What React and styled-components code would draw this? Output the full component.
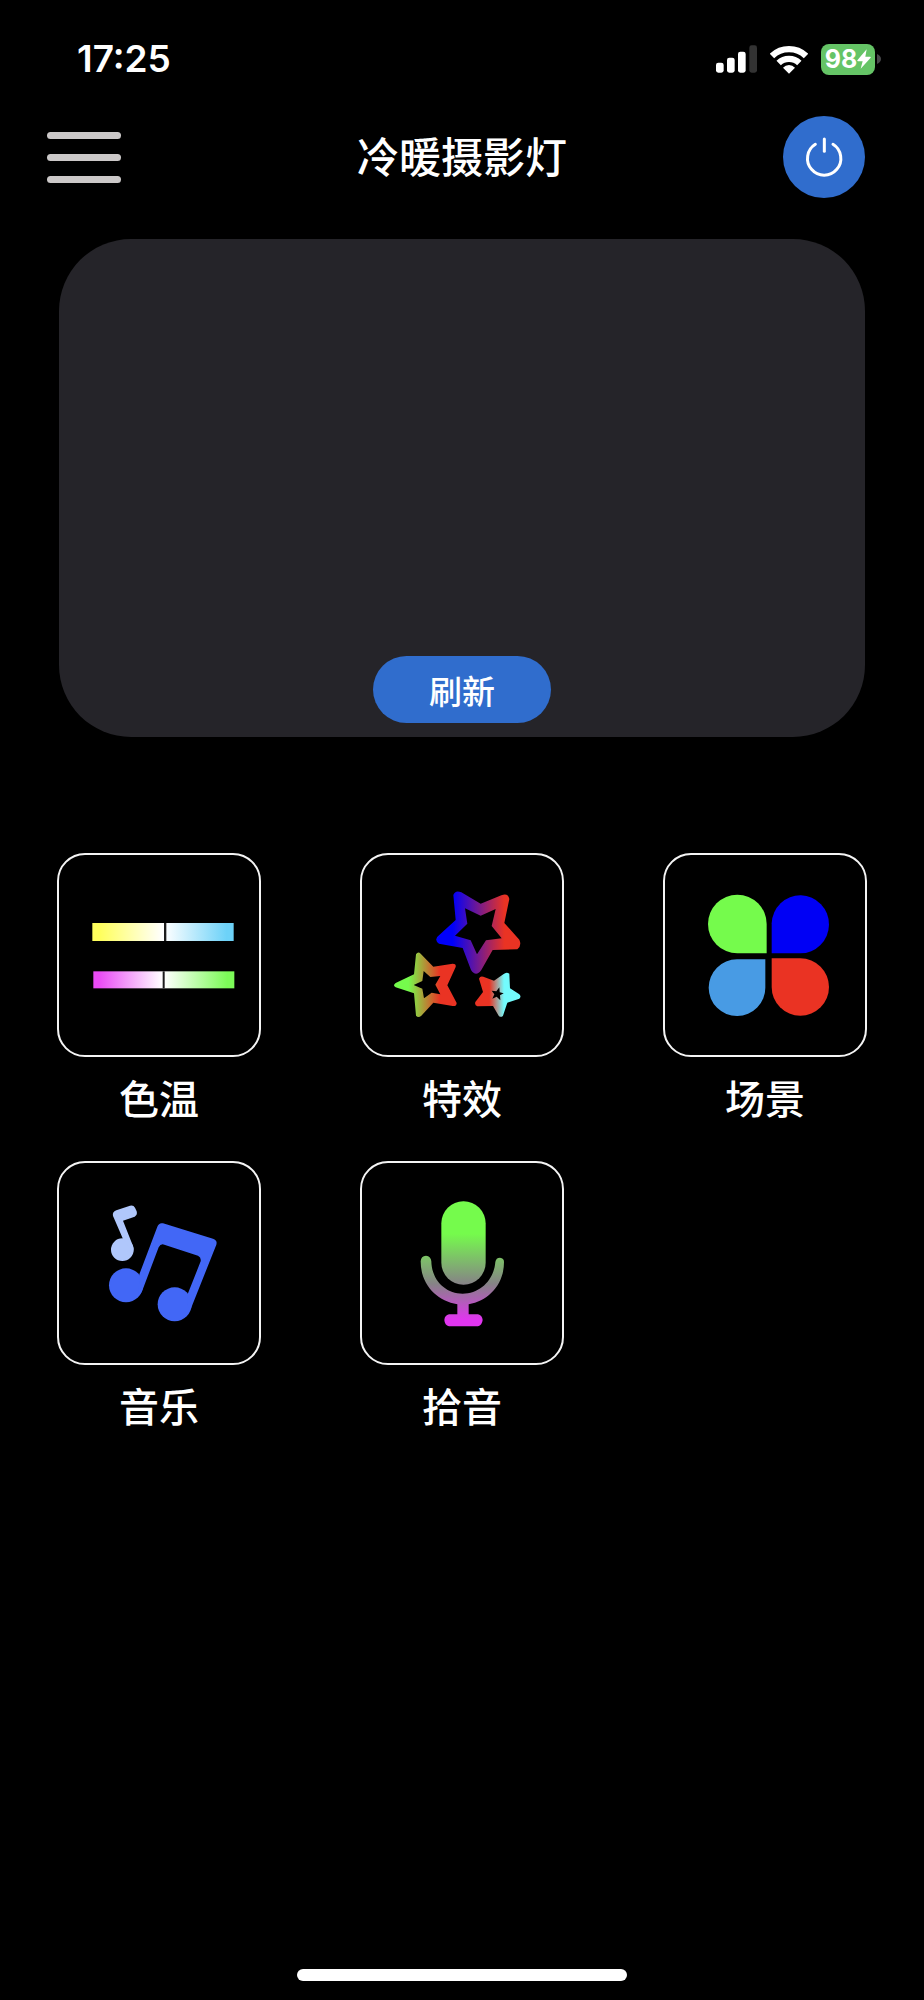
import * as React from 'react';
import styled, { createGlobalStyle } from "styled-components"

const GlobalStyle = createGlobalStyle`
  * {
    box-sizing: border-box;
  }

  body {
    margin: 0;
    background-color: #000000;
    color: #ffffff;
    font-family: 'Inter', 'Noto Sans CJK SC', sans-serif;
  }

  button {
    padding: 0;
    border: none;
    background: none;
    color: inherit;
    font-family: inherit;
    cursor: pointer;
  }
`

const Screen = styled.div`
  min-height: 100vh;
  display: flex;
  flex-direction: column;
`

const StatusBar = styled.div`
  display: flex;
  align-items: center;
  justify-content: space-between;
  padding: 36px 43px 0 77px;
`

const Time = styled.time`
  font-size: 37px;
  font-weight: 600;
  line-height: 46px;
`

const StatusIcons = styled.div`
  display: flex;
  align-items: center;
  gap: 13px;
`

const BatteryWrap = styled.div`
  display: flex;
  align-items: center;
  gap: 2px;
`

const Battery = styled.div`
  display: flex;
  align-items: center;
  justify-content: center;
  width: 54px;
  height: 31px;
  border-radius: 8px;
  background-color: #65c466;
  font-size: 25px;
  font-weight: 700;
  line-height: 31px;
`

const Header = styled.header`
  display: grid;
  grid-template-columns: 1fr auto 1fr;
  align-items: center;
  padding: 34px 47px 0;
`

const MenuButton = styled.button`
  display: flex;
  flex-direction: column;
  gap: 15px;
  width: 74px;
`

const MenuLine = styled.span`
  width: 100%;
  height: 7px;
  border-radius: 4px;
  background-color: #cbc8c8;
`

const Title = styled.h1`
  margin: 0;
  padding-top: 2px;
  font-size: 42px;
  font-weight: 500;
  line-height: 60px;
`

const PowerButton = styled.button`
  display: flex;
  align-items: center;
  justify-content: center;
  justify-self: end;
  width: 82px;
  height: 82px;
  margin-right: 12px;
  border-radius: 50%;
  background-color: #306dcd;
`

const DevicePanel = styled.section`
  display: flex;
  align-items: flex-end;
  justify-content: center;
  aspect-ratio: 806 / 498;
  margin: 41px 59px 0;
  padding-bottom: 14px;
  border-radius: 72px;
  background-color: #252429;
`

const RefreshButton = styled.button`
  width: 178px;
  height: 67px;
  border-radius: 34px;
  background-color: #306dcd;
  font-size: 33px;
  font-weight: 500;
`

const ModeGrid = styled.main`
  display: grid;
  grid-template-columns: repeat(3, 204px);
  justify-content: space-between;
  row-gap: 33px;
  padding: 116px 57px 0;
`

const ModeButton = styled.button`
  display: flex;
  flex-direction: column;
  align-items: center;
  gap: 15px;
  font-size: 40px;
  font-weight: 500;
  line-height: 56px;
`

const Tile = styled.span`
  display: block;
  width: 204px;
  height: 204px;
  border: 2px solid #f4f4f4;
  border-radius: 28px;
  overflow: hidden;

  svg {
    display: block;
    width: 100%;
    height: 100%;
  }
`

const HomeBar = styled.div`
  width: 330px;
  height: 12px;
  margin: auto auto 19px;
  border-radius: 6px;
  background-color: #ffffff;
`

function SignalIcon() {
  return (
    <svg width="41" height="28" viewBox="0 0 123 84" aria-hidden="true">
      <g fill="#ffffff">
        <rect x="0" y="53" width="23" height="30" rx="7" />
        <rect x="33" y="38" width="23" height="45" rx="7" />
        <rect x="66" y="20" width="23" height="63" rx="7" />
      </g>
      <rect x="100" y="1" width="23" height="82" rx="7" fill="#333333" />
    </svg>
  )
}

function WifiIcon() {
  return (
    <svg width="38" height="29" viewBox="0 0 114 87" aria-hidden="true">
      <g fill="none" stroke="#ffffff" strokeWidth="19">
        <path d="M6 33A74 74 0 0 1 108 33" />
        <path d="M26 54A45 45 0 0 1 88 54" />
      </g>
      <path d="M57 86L39 68A25 25 0 0 1 75 68Z" fill="#ffffff" />
    </svg>
  )
}

function BoltIcon() {
  return (
    <svg width="14" height="20" viewBox="0 0 42 60" aria-hidden="true">
      <path d="M29 1L1 34Q0 37 3 37L17 37L11 59L41 26Q42 23 39 23L25 23Z" fill="#ffffff" />
    </svg>
  )
}

function BatteryTip() {
  return (
    <svg width="4" height="10" viewBox="0 0 4 10" aria-hidden="true">
      <path d="M0 0Q4 2 4 5Q4 8 0 10Z" fill="#48484a" />
    </svg>
  )
}

function PowerIcon() {
  return (
    <svg width="40" height="40" viewBox="0 0 120 120" fill="none" stroke="#ffffff" strokeWidth="9" strokeLinecap="round" aria-hidden="true">
      <path d="M34 22A50 50 0 1 0 87 22" />
      <path d="M61 6V43" />
    </svg>
  )
}

function TemperatureIcon() {
  return (
    <svg viewBox="57 44 600 600" aria-hidden="true">
      <defs>
        <linearGradient id="warm">
          <stop offset="0.05" stopColor="#ffff5c" />
          <stop offset="0.5" stopColor="#ffffff" />
          <stop offset="0.55" stopColor="#f2fbff" />
          <stop offset="0.95" stopColor="#6dd2f8" />
        </linearGradient>
        <linearGradient id="tint">
          <stop offset="0.04" stopColor="#ea4bf5" />
          <stop offset="0.49" stopColor="#ffffff" />
          <stop offset="0.52" stopColor="#fafff8" />
          <stop offset="0.95" stopColor="#7cfb58" />
        </linearGradient>
      </defs>
      <rect x="157" y="248" width="424" height="54" fill="url(#warm)" />
      <rect x="372" y="248" width="7" height="54" fill="#1c1c1c" />
      <rect x="160" y="393" width="423" height="51" fill="url(#tint)" />
      <rect x="368" y="393" width="6" height="51" fill="#1c1c1c" />
    </svg>
  )
}

function StarsIcon() {
  return (
    <svg viewBox="66 44 600 600" fillRule="evenodd" aria-hidden="true">
      <defs>
        <linearGradient id="starBig" gradientUnits="userSpaceOnUse" x1="338" y1="0" x2="494" y2="0">
          <stop offset="0" stopColor="#0000fa" />
          <stop offset="1" stopColor="#ea3323" />
        </linearGradient>
        <linearGradient id="starLeft" gradientUnits="userSpaceOnUse" x1="205" y1="0" x2="300" y2="0">
          <stop offset="0" stopColor="#75fb4c" />
          <stop offset="1" stopColor="#ea3323" />
        </linearGradient>
        <linearGradient id="starRight" gradientUnits="userSpaceOnUse" x1="448" y1="0" x2="492" y2="0">
          <stop offset="0" stopColor="#ea3323" />
          <stop offset="1" stopColor="#73fbfd" />
        </linearGradient>
      </defs>
      <path
        fill="url(#starBig)"
        d="M340 164Q346 148 364 156L422 190L484 165Q504 157 508 176L493 248L538 298Q546 316 532 327L458 329L424 389Q408 412 393 389L368 323L297 310Q280 297 297 285L347 239Z
           M375 204L382 250L345 286L392 300L411 342L438 300L485 294L455 257L467 206L422 226Z"
      />
      <path
        fill="url(#starLeft)"
        d="M228 342Q234 332 242 340L280 379L338 370Q349 370 347 380L322 435L350 488Q350 499 338 497L280 487L244 526Q235 534 228 526L222 459L167 441Q157 435 167 428L222 402Z
           M251 392L247 422L221 434L247 445L252 474L275 457L301 462L286 433L301 407L271 410Z"
      />
      <path
        fill="url(#starRight)"
        d="M490 402Q499 393 508 400L510 444L538 462Q545 469 538 475L502 487L489 526Q483 533 476 526L459 497L412 498Q403 494 406 485L429 455L417 415Q420 406 430 409L462 421Z
           M478 441L469 453L455 451L463 462L457 475L470 469L481 480L480 465L491 459L479 456Z"
      />
    </svg>
  )
}

function SceneIcon() {
  return (
    <svg viewBox="75 44 600 600" aria-hidden="true">
      <path d="M380 339H292A88 88 0 1 1 380 251Z" fill="#75fb4c" />
      <path d="M395 339V249A86 87 0 1 1 481 339Z" fill="#0000f5" />
      <path d="M376 357V441A85 85 0 1 1 291 357Z" fill="#489be4" />
      <path d="M395 354H481A86 86 0 1 1 395 440Z" fill="#ea3323" />
    </svg>
  )
}

function MusicIcon() {
  return (
    <svg viewBox="57 53 600 600" aria-hidden="true">
      <g fill="#b0c7fb">
        <circle cx="247" cy="313" r="34" />
        <path d="M219 212Q216 200 229 195L270 181Q280 178 285 187L290 198Q293 209 284 214L249 226L279 302Q282 311 279 322L248 279L222 219Z" />
      </g>
      <g fill="#4267f6">
        <circle cx="258" cy="420" r="51" />
        <circle cx="404" cy="477" r="51" />
        <path d="M298 387L352 244Q357 231 369 234L519 280Q533 285 529 298L452 492Q440 500 444 444L482 348Q484 336 474 331L373 298Q362 294 356 306L309 430Q304 445 296 450Z" />
      </g>
    </svg>
  )
}

function MicIcon() {
  return (
    <svg viewBox="66 53 600 600" aria-hidden="true">
      <defs>
        <linearGradient id="mic" gradientUnits="userSpaceOnUse" x1="0" y1="168" x2="0" y2="543">
          <stop offset="0.26" stopColor="#75fb4c" />
          <stop offset="0.66" stopColor="#868386" />
          <stop offset="0.95" stopColor="#e135f0" />
        </linearGradient>
      </defs>
      <rect x="304" y="168" width="133" height="250" rx="66" fill="url(#mic)" />
      <path
        d="M242 348Q243 332 258 331Q273 333 274 348C275 404 316 445 368 445C420 445 462 404 466 350Q468 337 480 337Q492 338 492 350C492 418 446 466 386 477V507H414Q427 511 428 524Q426 540 414 543H327Q314 540 313 524Q314 510 327 507H352V477C290 466 242 418 242 348Z"
        fill="url(#mic)"
      />
    </svg>
  )
}

export default function App() {
  const modes = [
    { id: 1, label: "色温", icon: <TemperatureIcon /> },
    { id: 2, label: "特效", icon: <StarsIcon /> },
    { id: 3, label: "场景", icon: <SceneIcon /> },
    { id: 4, label: "音乐", icon: <MusicIcon /> },
    { id: 5, label: "拾音", icon: <MicIcon /> },
  ]

  return (
    <Screen lang="zh-CN">
      <GlobalStyle />
      <StatusBar>
        <Time>17:25</Time>
        <StatusIcons>
          <SignalIcon />
          <WifiIcon />
          <BatteryWrap>
            <Battery>
              98
              <BoltIcon />
            </Battery>
            <BatteryTip />
          </BatteryWrap>
        </StatusIcons>
      </StatusBar>
      <Header>
        <MenuButton aria-label="菜单">
          <MenuLine />
          <MenuLine />
          <MenuLine />
        </MenuButton>
        <Title>冷暖摄影灯</Title>
        <PowerButton aria-label="电源">
          <PowerIcon />
        </PowerButton>
      </Header>
      <DevicePanel>
        <RefreshButton>刷新</RefreshButton>
      </DevicePanel>
      <ModeGrid>
        {modes.map((mode) => (
          <ModeButton key={mode.id}>
            <Tile>{mode.icon}</Tile>
            {mode.label}
          </ModeButton>
        ))}
      </ModeGrid>
      <HomeBar />
    </Screen>
  )
}
